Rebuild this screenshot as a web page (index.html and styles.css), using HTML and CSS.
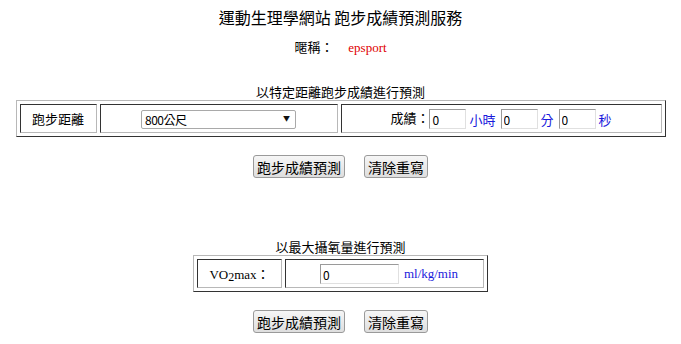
FILE: index.html
```html
<!DOCTYPE html>
<html lang="zh-Hant">
<head>
    <meta charset="UTF-8">
    <title>跑步成績預測服務</title>
    <link rel="stylesheet" href="styles.css">
</head>
<body>
    <h1 class="title">運動生理學網站 跑步成績預測服務</h1>
    <p class="nick">暱稱： <span class="nick-name">epsport</span></p>

    <form class="block block-distance">
        <h2 class="caption">以特定距離跑步成績進行預測</h2>
        <table class="grid grid-wide">
            <tr>
                <td class="cell-label">跑步距離</td>
                <td class="cell-select">
                    <span class="select-wrap">
                        <select class="select">
                            <option>800公尺</option>
                            <option>1500公尺</option>
                            <option>3000公尺</option>
                            <option>5000公尺</option>
                            <option>10000公尺</option>
                        </select>
                    </span>
                </td>
                <td class="cell-time">
                    成績：<input class="num" type="text" value="0"><span class="unit">小時</span><input class="num" type="text" value="0"><span class="unit">分</span><input class="num" type="text" value="0"><span class="unit unit-last">秒</span>
                </td>
            </tr>
        </table>
        <div class="actions">
            <button type="button" class="btn">跑步成績預測</button>
            <button type="reset" class="btn">清除重寫</button>
        </div>
    </form>

    <form class="block block-vo2">
        <h2 class="caption">以最大攝氧量進行預測</h2>
        <table class="grid grid-narrow">
            <tr>
                <td class="cell-vo2">VO<sub>2</sub>max：</td>
                <td class="cell-vo2-input">
                    <input class="num num-wide" type="text" value="0"><span class="unit unit-serif">ml/kg/min</span>
                </td>
            </tr>
        </table>
        <div class="actions">
            <button type="button" class="btn">跑步成績預測</button>
            <button type="reset" class="btn">清除重寫</button>
        </div>
    </form>
</body>
</html>
```

FILE: styles.css
```css
body {
    margin: 0;
    padding: 7px 8px 0;
    font-family: "Noto Sans CJK TC", "Liberation Sans", sans-serif;
    font-size: 13px;
    color: #000;
    background: #fff;
    text-align: center;
}

.title {
    margin: 0;
    font-size: 16px;
    font-weight: normal;
    line-height: 20px;
}

.nick {
    margin: 10px 0 0;
    line-height: 20px;
}

.nick-name {
    margin-left: 12px;
    color: #e00000;
    font-family: "Liberation Serif", serif;
}

.block-distance {
    margin-top: 26px;
}

.block-vo2 {
    margin-top: 61px;
}

.caption {
    margin: 0;
    font-size: 13px;
    font-weight: normal;
    line-height: 16px;
}

.grid {
    margin: 0 auto;
    border-collapse: separate;
    border-spacing: 3px;
    border: 1px solid;
    border-color: #b8b8b8 #333 #333 #b8b8b8;
}

.grid td {
    border: 1px solid;
    border-color: #333 #b8b8b8 #b8b8b8 #333;
    padding: 0;
    height: 27px;
    text-align: center;
    vertical-align: middle;
    white-space: nowrap;
}

.grid-wide {
    width: 650px;
}

.grid-narrow {
    width: 295px;
}

.cell-label {
    width: 75px;
}

.cell-select {
    width: 236px;
}

.select-wrap {
    position: relative;
    display: inline-block;
    vertical-align: middle;
}

.select-wrap::after {
    content: "▼";
    position: absolute;
    right: 6px;
    top: 5px;
    font-size: 7px;
    line-height: 9px;
    color: #111;
    pointer-events: none;
}

.select {
    appearance: none;
    -webkit-appearance: none;
    width: 155px;
    height: 19px;
    padding: 0 0 0 3px;
    border: 1px solid #a9a9a9;
    border-radius: 2px;
    background: #fff;
    font-family: "Noto Sans CJK TC", "Liberation Sans", sans-serif;
    font-size: 12px;
    letter-spacing: -0.5px;
    color: #000;
    vertical-align: middle;
}

.num {
    width: 37px;
    height: 20px;
    box-sizing: border-box;
    margin: 0;
    padding: 0 2px;
    border: 1px solid;
    border-color: #9a9a9a #e0e0e0 #e0e0e0 #9a9a9a;
    font-family: "Noto Sans CJK TC", "Liberation Sans", sans-serif;
    font-size: 12px;
    vertical-align: middle;
}

.num-wide {
    width: 79px;
    margin-left: 9px;
}

.unit {
    display: inline-block;
    color: #1a1adc;
    margin: 0 5px 0 3px;
    vertical-align: middle;
}

.unit-last {
    margin-right: 0;
}

.unit-serif {
    margin: 0 0 0 5px;
    font-family: "Liberation Serif", serif;
    font-size: 13px;
}

.cell-vo2 {
    width: 83px;
    font-family: "Liberation Serif", "Noto Sans CJK TC", serif;
    font-size: 13px;
}

.cell-vo2 sub {
    font-size: 12px;
    vertical-align: -2px;
    line-height: 0;
}

.cell-vo2-input {
    text-align: center;
}

.actions {
    margin-top: 18px;
    display: flex;
    justify-content: center;
    gap: 19px;
}

.btn {
    height: 23px;
    padding: 0 3px;
    border: 1px solid #9a9a9a;
    border-radius: 3px;
    background: linear-gradient(to bottom, #f6f6f6, #dedede);
    font-family: "Noto Sans CJK TC", "Liberation Sans", sans-serif;
    font-size: 14px;
    line-height: 20px;
    color: #000;
}
```
